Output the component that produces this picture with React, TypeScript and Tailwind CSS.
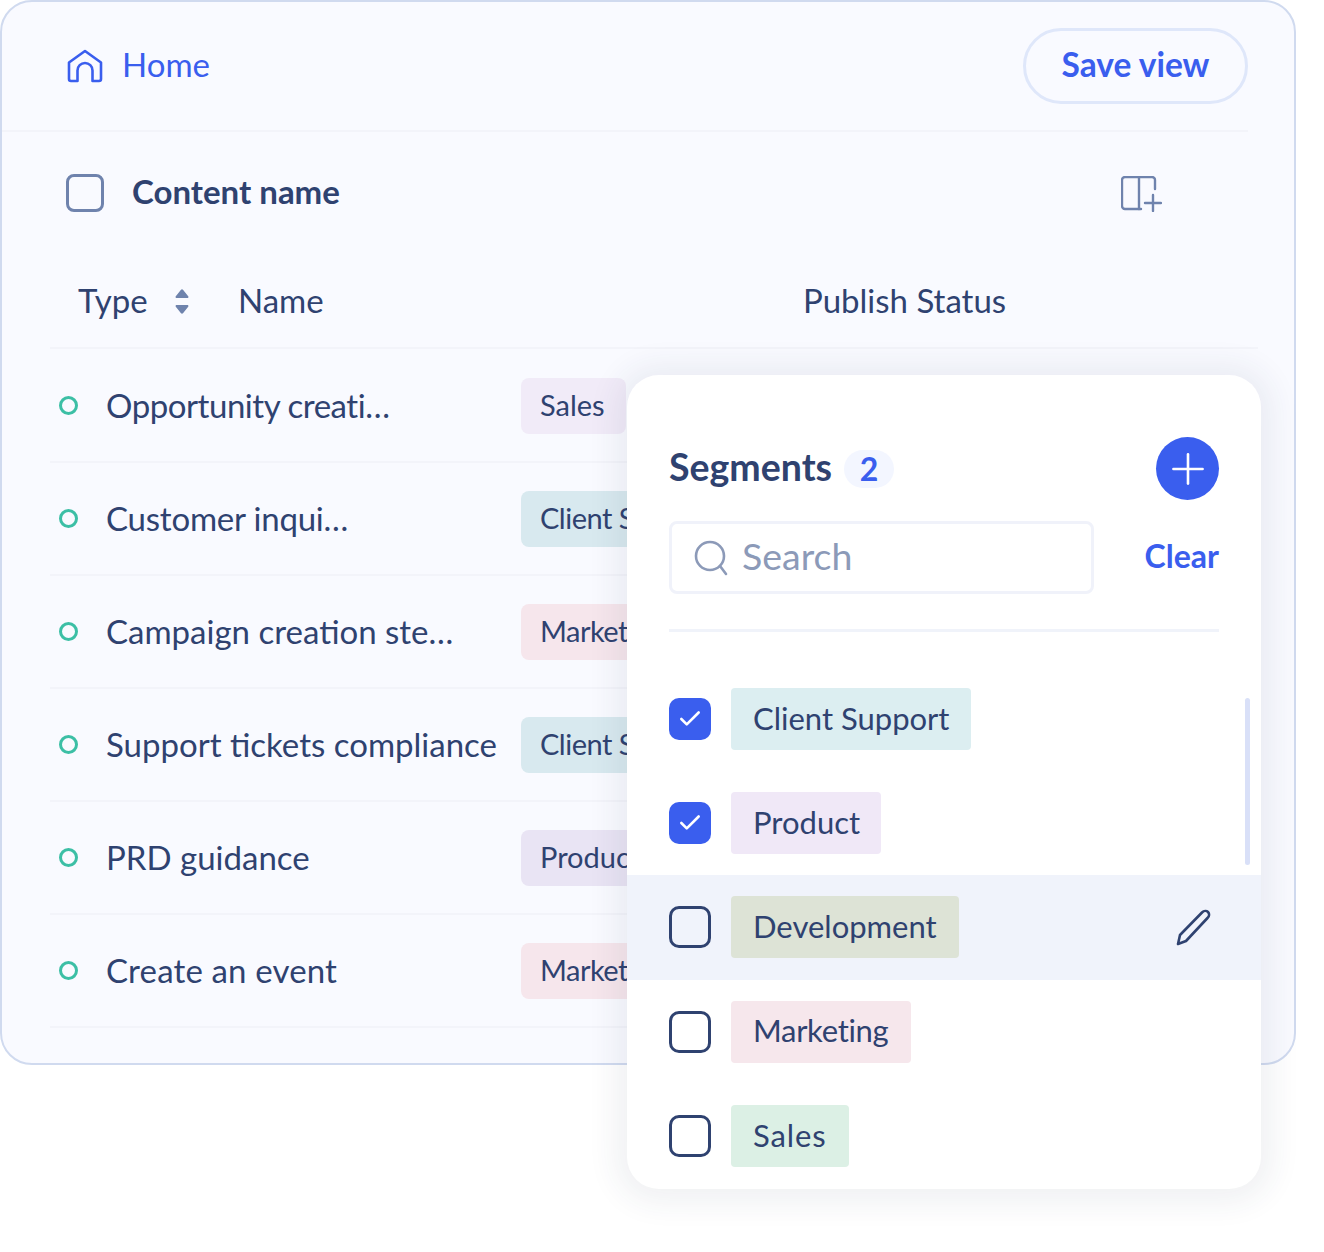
import { Check, Plus } from "lucide-react";

const rows = [
  { name: "Opportunity creati…", fit: "tracking-[-0.45px]", tag: "Sales", tagFit: "", color: "bg-[#f1ebf8]" },
  { name: "Customer inqui…", fit: "tracking-[-0.2px]", tag: "Client Support", tagFit: "tracking-[-0.5px]", color: "bg-[#d8e9ef]" },
  { name: "Campaign creation ste…", fit: "", tag: "Marketing", tagFit: "tracking-[-0.5px]", color: "bg-[#f6e6ec]" },
  { name: "Support tickets compliance", fit: "", tag: "Client Support", tagFit: "tracking-[-0.5px]", color: "bg-[#d8e9ef]" },
  { name: "PRD guidance", fit: "", tag: "Product", tagFit: "", color: "bg-[#e9e4f4]" },
  { name: "Create an event", fit: "tracking-[0.15px]", tag: "Marketing", tagFit: "tracking-[-0.5px]", color: "bg-[#f6e6ec]" },
];

const segments = [
  { name: "Client Support", color: "bg-[#dceef1] w-[240px]", checked: true },
  { name: "Product", color: "bg-[#f0e8f7] w-[150px]", checked: true },
  { name: "Development", color: "bg-[#dde3d6] w-[228px]", hover: true },
  { name: "Marketing", color: "bg-[#f6e7ec] w-[180px] tracking-[-0.3px]" },
  { name: "Sales", color: "bg-[#dcf0e5] w-[118px] tracking-[0.9px]" },
];

function HomeIcon() {
  return (
    <svg width="36" height="34" viewBox="0 0 36 34" fill="none" stroke="#3a5eee" strokeWidth="2.6" strokeLinejoin="round" strokeLinecap="round">
      <path d="M2 13.5 18 2l16 11.5V30a2 2 0 0 1-2 2h-6.500V21.500a7.500 7.500 0 0 0-15 0V32H4a2 2 0 0 1-2-2Z" />
    </svg>
  );
}

function ColumnsIcon() {
  return (
    <svg width="41" height="36" viewBox="0 0 41 36" fill="none" stroke="#6f83ad" strokeWidth="2.4" strokeLinecap="round">
      <path d="M34 13V4a3 3 0 0 0-3-3H4a3 3 0 0 0-3 3v26a3 3 0 0 0 3 3h16" />
      <path d="M18 1v32M32 19v16M24 27h16" />
    </svg>
  );
}

function SortIcon() {
  return (
    <svg width="14" height="25" viewBox="0 0 14 25" fill="#6f83ad">
      <path d="M5.800 1 .8 7.200C.200 8 .700 9 1.700 9h10.600c1 0 1.500-1 .900-1.800L8.200 1a1.500 1.500 0 0 0-2.400 0Z" />
      <path d="M5.800 24 .8 17.800C.200 17 .700 16 1.700 16h10.600c1 0 1.500 1 .900 1.800L8.200 24a1.500 1.500 0 0 1-2.400 0Z" />
    </svg>
  );
}

function SearchIcon() {
  return (
    <svg width="34" height="36" viewBox="0 0 34 36" fill="none" stroke="#8c9ab8" strokeWidth="2.600" strokeLinecap="round">
      <circle cx="16" cy="16" r="14" />
      <path d="m26 26 6 8" />
    </svg>
  );
}

function PencilIcon() {
  return (
    <svg width="36" height="37" viewBox="0 0 36 37" fill="none" stroke="#2f4270" strokeWidth="2.600" strokeLinejoin="round" className="shrink-0">
      <path d="M2 35l2-9L26 3.500c2-2 4.500-2 6-.5s1.500 4-.5 6L10 32Z" />
    </svg>
  );
}

function SegmentRow({ name, color, checked, hover }: { name: string; color: string; checked?: boolean; hover?: boolean }) {
  return (
    <div className={`flex h-[104.200px] items-center pl-[42px] pr-[49px] ${hover ? "bg-[#f0f3fb]" : ""}`}>
      {checked ? (
        <span className="flex h-[42px] w-[42px] items-center justify-center rounded-[10px] bg-[#3a5eee]">
          <Check size={26} color="white" strokeWidth={2.4} />
        </span>
      ) : (
        <span className="h-[42px] w-[42px] rounded-[10px] border-[3px] border-[#2f4270]" />
      )}
      <span className={`ml-[20px] flex h-[62px] items-center rounded-[4px] pb-[2px] pl-[22px] text-[31px] text-[#2f4270] ${color}`}>{name}</span>
      {hover ? <span className="ml-auto"><PencilIcon /></span> : null}
    </div>
  );
}

export default function App() {
  return (
    <div className="relative h-[1252px] w-[1324px] bg-white font-['Lato',sans-serif] text-[#2f4270]">
      <div className="h-[1065px] w-[1296px] overflow-hidden rounded-[32px] border-2 border-[#d0daef] bg-[#f9faff]">
        <div className="mr-[46px] flex h-[130px] items-center justify-between border-b-2 border-[#f3f4fa] pl-[65px]">
          <div className="flex items-center gap-[19px] text-[33px] text-[#3a5eee]">
            <HomeIcon />
            <span className="-mt-[2px]">Home</span>
          </div>
          <button className="ml-auto flex h-[76px] w-[225px] items-center justify-center rounded-full border-[3px] border-[#dfe7fa] pb-[3px] text-[33.500px] font-bold text-[#3a5eee]">Save view</button>
        </div>

        <div className="flex h-[123px] items-center pl-[64px] pr-[132px]">
          <span className="-mt-[1px] h-[38px] w-[38px] rounded-[8px] border-[3px] border-[#6f83ad]" />
          <span className="-mt-[4px] ml-[28px] text-[33px] font-bold">Content name</span>
          <span className="ml-auto"><ColumnsIcon /></span>
        </div>

        <div className="ml-[48px] flex h-[94px] w-[1208px] items-center border-b-2 border-[#f3f4fa]">
          <span className="ml-[28px] w-[97px] text-[33px]">Type</span>
          <SortIcon />
          <span className="ml-[49px] w-[85px] text-[33px]">Name</span>
          <span className="ml-[480px] text-[33px]">Publish Status</span>
        </div>

        <div className="pt-[1px]">
          {rows.map((row) => (
            <div key={row.name} className="ml-[48px] flex h-[113px] w-[1208px] items-center border-b-2 border-[#f3f4fa]">
              <span className="ml-[9px] h-[19px] w-[19px] rounded-full border-[3px] border-[#3cbfa5]" />
              <span className={`ml-[28px] w-[415px] text-[33px] ${row.fit}`}>{row.name}</span>
              <span className={`mt-[1px] flex h-[56px] items-center rounded-[8px] pb-[2px] pl-[19px] pr-[21px] text-[29px] whitespace-nowrap ${row.color} ${row.tagFit}`}>{row.tag}</span>
            </div>
          ))}
        </div>
      </div>

      <div className="absolute left-[627px] top-[375px] h-[814px] w-[634px] rounded-[32px] bg-white shadow-[0_2px_30px_12px_rgba(40,50,90,0.07)]">
        <div className="flex items-start justify-between px-[42px] pt-[62px]">
          <div className="flex h-[63px] items-center">
            <span className="-mt-[2px] text-[37.500px] font-bold">Segments</span>
            <span className="ml-[12px] flex h-[38px] w-[50px] items-center justify-center rounded-full bg-[#f3f6ff] text-[32px] font-bold text-[#3a5eee]">2</span>
          </div>
          <button className="flex h-[63px] w-[63px] items-center justify-center rounded-full bg-[#3a5eee]">
            <Plus size={50} color="white" strokeWidth={1.250} />
          </button>
        </div>
        <div className="mt-[21px] flex items-center justify-between px-[42px]">
          <div className="flex h-[73px] w-[425px] items-center rounded-[8px] border-[3px] border-[#f0f2fa] pl-[22px]">
            <SearchIcon />
            <span className="-mt-[2px] ml-[14px] text-[37.500px] text-[#8c9ab8]">Search</span>
          </div>
          <span className="-mt-[3px] text-[32px] font-bold text-[#3a5eee]">Clear</span>
        </div>
        <div className="mx-[42px] mt-[35px] h-[3px] bg-[#f0f3fa]" />
        <div className="mt-[35px]">
          {segments.map((segment) => (
            <SegmentRow key={segment.name} {...segment} />
          ))}
        </div>
        <div className="absolute left-[618px] top-[323px] h-[167px] w-[5px] rounded-full bg-[#d9e0f8]" />
      </div>
    </div>
  );
}
